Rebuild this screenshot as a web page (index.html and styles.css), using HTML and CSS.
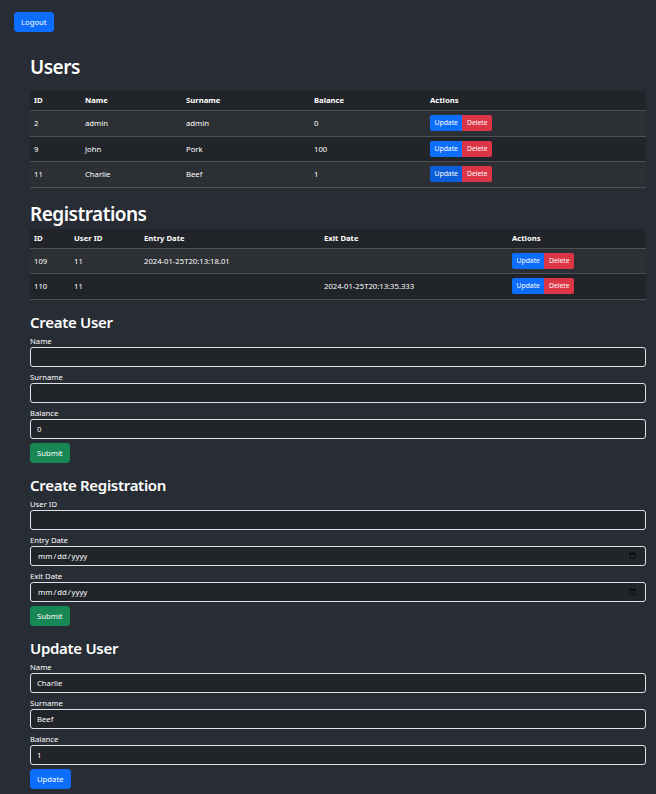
FILE: index.html
```html
<!DOCTYPE html>
<html lang="en">
<head>
<meta charset="utf-8">
<title>Admin</title>
<link rel="stylesheet" href="styles.css">
</head>
<body>
<div class="topbar"><button class="btn btn-primary">Logout</button></div>
<div class="container">
  <h1 class="title users-title">Users</h1>
  <table class="table users">
    <thead><tr><th>ID</th><th>Name</th><th>Surname</th><th>Balance</th><th>Actions</th></tr></thead>
    <tbody>
      <tr><td>2</td><td>admin</td><td>admin</td><td>0</td><td><div class="acts"><button class="bsm btn-primary">Update</button><button class="bsm btn-danger">Delete</button></div></td></tr>
      <tr><td>9</td><td>John</td><td>Pork</td><td>100</td><td><div class="acts"><button class="bsm btn-primary">Update</button><button class="bsm btn-danger">Delete</button></div></td></tr>
      <tr><td>11</td><td>Charlie</td><td>Beef</td><td>1</td><td><div class="acts"><button class="bsm btn-primary hover">Update</button><button class="bsm btn-danger">Delete</button></div></td></tr>
    </tbody>
  </table>

  <h1 class="title regs-title">Registrations</h1>
  <table class="table regs">
    <thead><tr><th>ID</th><th>User ID</th><th>Entry Date</th><th>Exit Date</th><th>Actions</th></tr></thead>
    <tbody>
      <tr><td>109</td><td>11</td><td>2024-01-25T20:13:18.01</td><td></td><td><div class="acts"><button class="bsm btn-primary">Update</button><button class="bsm btn-danger">Delete</button></div></td></tr>
      <tr><td>110</td><td>11</td><td></td><td>2024-01-25T20:13:35.333</td><td><div class="acts"><button class="bsm btn-primary">Update</button><button class="bsm btn-danger">Delete</button></div></td></tr>
    </tbody>
  </table>

  <h3 class="sub">Create User</h3>
  <form class="form">
    <div class="group"><label>Name</label><input class="ctl" type="text"></div>
    <div class="group"><label>Surname</label><input class="ctl" type="text"></div>
    <div class="group"><label>Balance</label><input class="ctl" type="number" value="0"></div>
    <button type="button" class="btn btn-success">Submit</button>
  </form>

  <h3 class="sub">Create Registration</h3>
  <form class="form">
    <div class="group"><label>User ID</label><input class="ctl" type="text"></div>
    <div class="group"><label>Entry Date</label><input class="ctl" type="date"></div>
    <div class="group"><label>Exit Date</label><input class="ctl" type="date"></div>
    <button type="button" class="btn btn-success">Submit</button>
  </form>

  <h3 class="sub">Update User</h3>
  <form class="form">
    <div class="group"><label>Name</label><input class="ctl" type="text" value="Charlie"></div>
    <div class="group"><label>Surname</label><input class="ctl" type="text" value="Beef"></div>
    <div class="group"><label>Balance</label><input class="ctl" type="number" value="1"></div>
    <button type="button" class="btn btn-primary">Update</button>
  </form>
</div>
</body>
</html>
```
FILE: styles.css
```css
html, body {
  margin: 0;
  padding: 0;
  background: #282c34;
  color: #fff;
  font-family: "Noto Sans", "Open Sans", sans-serif;
  font-size: 7.7px;
  line-height: 12px;
}
.topbar {
  padding: 12px 14px 0;
}
.container {
  padding: 0 10px 20px 30px;
}
button {
  font-family: inherit;
  cursor: pointer;
}
.btn {
  display: inline-block;
  height: 20px;
  padding: 0 6px;
  border: 1px solid transparent;
  border-radius: 3px;
  font-size: 7.7px;
  line-height: 18px;
  color: #fff;
}
.btn-primary { background: #0d6efd; border-color: #0d6efd; }
.btn-success { background: #198754; border-color: #198754; }
.btn-danger { background: #dc3545; border-color: #dc3545; }
.hover { background: #0b5ed7; border-color: #0a58ca; }
.acts {
  display: flex;
  height: 16px;
}
.bsm {
  height: 16px;
  padding: 0 3.5px;
  border: 1px solid transparent;
  border-radius: 2px;
  font-size: 6.8px;
  line-height: 14px;
  color: #fff;
}
.bsm.btn-primary { border-top-right-radius: 0; border-bottom-right-radius: 0; }
.bsm.btn-danger { border-top-left-radius: 0; border-bottom-left-radius: 0; }
.title {
  margin: 0;
  font-size: 19px;
  font-weight: 600;
  letter-spacing: -0.5px;
  line-height: 23px;
}
.users-title { margin-top: 24px; margin-bottom: 12px; }
.regs-title { margin-top: 15px; margin-bottom: 3px; }
.table {
  width: 100%;
  border-collapse: collapse;
  table-layout: fixed;
  background: #212529;
  vertical-align: top;
}
.table th, .table td {
  padding: 4px 4px;
  text-align: left;
  border-bottom: 1px solid #4d5154;
  height: 16.5px;
  box-sizing: content-box;
  white-space: nowrap;
}
.table th {
  font-weight: 700;
  height: 11px;
  line-height: 11px;
}
.table tbody tr:nth-child(odd) { background: #2c3034; }
.users th:nth-child(1) { width: 43px; }
.users th:nth-child(2) { width: 93px; }
.users th:nth-child(3) { width: 120px; }
.users th:nth-child(4) { width: 108px; }
.regs th:nth-child(1) { width: 32px; }
.regs th:nth-child(2) { width: 62px; }
.regs th:nth-child(3) { width: 172px; }
.regs th:nth-child(4) { width: 180px; }
.sub {
  margin: 14px 0 4px;
  font-size: 15px;
  font-weight: 600;
  letter-spacing: -0.3px;
  line-height: 17px;
}
.form { margin: 0 0 1px; }
.group { margin-bottom: 4px; }
.group label {
  display: block;
  line-height: 12px;
}
.ctl {
  display: block;
  box-sizing: border-box;
  width: 100%;
  height: 20px;
  margin: 0;
  padding: 0 6px;
  background: #212529;
  color: #fff;
  border: 1px solid #dee2e6;
  border-radius: 3px;
  font-family: inherit;
  font-size: 7.7px;
}
.ctl::-webkit-inner-spin-button { display: none; }
```
